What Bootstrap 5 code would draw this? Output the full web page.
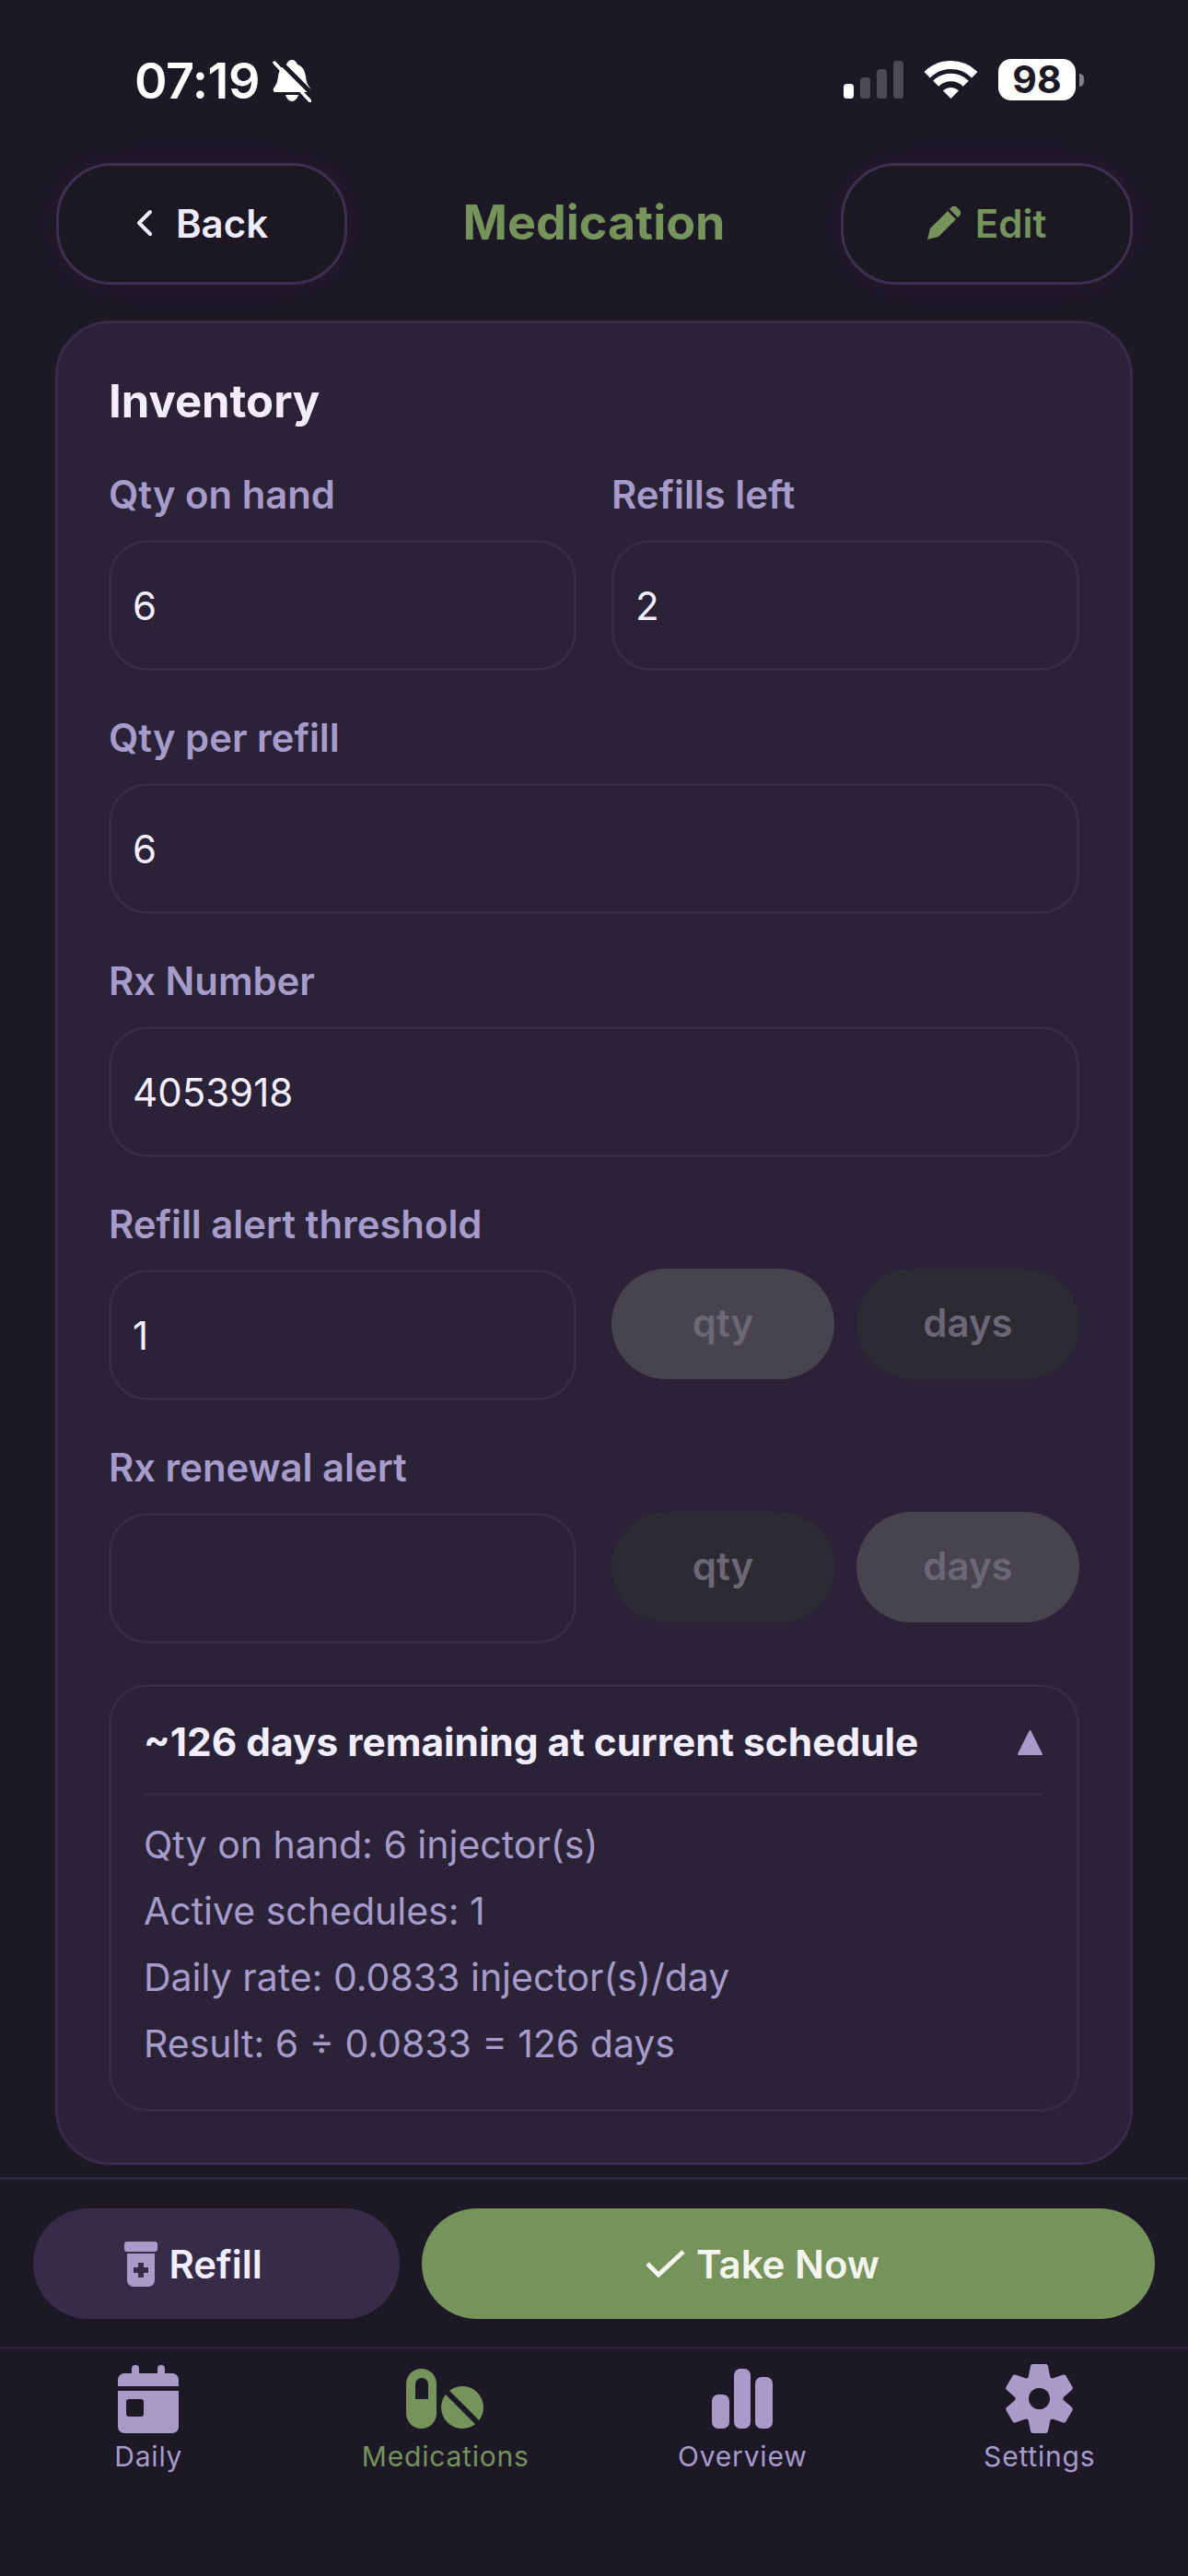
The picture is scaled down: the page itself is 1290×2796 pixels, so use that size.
<!DOCTYPE html>
<html lang="en">
<head>
    <meta charset="UTF-8">
    <meta name="viewport" content="width=device-width, initial-scale=1.0">
    <title>Medication</title>
    <link href="https://cdn.jsdelivr.net/npm/bootstrap@5.3.3/dist/css/bootstrap.min.css" rel="stylesheet">
    <style>
        body {
            background: #1d1826;
            font-family: Inter, "Liberation Sans", sans-serif;
            color: #f3eeff;
            width: 1290px;
            height: 2796px;
            overflow: hidden;
        }
        /* status bar */
        .status-row { height: 177px; padding: 61px 113px 0 146px; align-items: flex-start; }
        .clock { font-size: 54px; font-weight: 600; line-height: 54px; color: #fff; letter-spacing: -.5px; margin-right: 14px; }
        .bell { width: 42px; height: 46px; margin-top: 4px; }
        .signal { width: 65px; height: 41px; margin: 5px 23px 0 0; }
        .wifi { width: 57px; height: 41px; margin: 5px 23px 0 0; }
        .battery { width: 84px; height: 45px; margin-top: 3px; background: #fff; color: #1d1826; border-radius: 14px; font-size: 41px; font-weight: 700; line-height: 45px; text-align: center; }
        .battery-tip { width: 5px; height: 14px; margin: 19px 0 0 4px; background: #85828c; border-radius: 0 6px 6px 0; }
        /* header */
        .page-head { padding: 0 60px 0 61px; height: 171px; align-items: flex-start; }
        .head-btn { width: 316px; height: 132px; border-radius: 60px; background: #1b1823; border: 3px solid #3a3250; font-size: 42px; font-weight: 600; color: #f0ebff; padding-bottom: 8px; box-shadow: 0 0 24px rgba(42, 36, 56, .45); }
        .head-btn:hover { background: #1b1823; border-color: #3a3250; color: #f0ebff; }
        .head-btn.edit-btn, .head-btn.edit-btn:hover { width: 317px; color: #75935a; }
        .page-title { font-size: 52px; font-weight: 700; color: #75935a; line-height: 130px; margin: 0; }
        /* inventory card */
        .inv-card { margin: 0 60px; height: 2002px; background: #2a2338; border: 3px solid #352d48; border-radius: 60px; padding: 55px 55px 0; color: #f3eeff; }
        .inv-title { font-size: 49px; font-weight: 700; line-height: 60px; margin-bottom: 46px; }
        .field-label { display: block; font-size: 41.8px; font-weight: 600; line-height: 50px; margin-bottom: 24px; color: #a79bca; }
        .field-block { margin-bottom: 48px; }
        .two-up { --bs-gutter-x: 38px; --bs-gutter-y: 0; }
        .form-control.dark-input { height: 142px; background: transparent; border: 3px solid #352d48; border-radius: 42px; color: #f3eeff; font-size: 42px; padding: 0 23px; }
        .unit-btn { flex: 1 1 0; height: 120px; margin-top: -1px; border: 0; border-radius: 60px; font-size: 42px; font-weight: 600; color: #6b6774; background: #2c2a33; padding: 0 0 4px; }
        .unit-btn.is-picked { background: #48444f; }
        .calc-box { margin-top: 44px; height: 464px; border: 3px solid #352d48; border-radius: 42px; padding: 32px 35px 0; }
        .calc-head { font-size: 42.4px; font-weight: 700; line-height: 56px; padding-bottom: 27px; border-bottom: 3px solid #312a40; margin-bottom: 17px; }
        .calc-arrow { margin-right: 2px; }
        .calc-line { font-size: 41px; line-height: 72px; color: #a79bca; }
        /* actions */
        .action-bar { margin-top: 13px; height: 187px; padding: 31px 36px 0; gap: 24px; border-top: 3px solid #2e2740; border-bottom: 3px solid #2a2338; }
        .action-btn { height: 120px; border: 0; border-radius: 60px; font-size: 42px; font-weight: 600; color: #f3eeff; gap: 12px; }
        .refill-btn, .refill-btn:hover { width: 398px; background: #352d47; color: #f3eeff; padding: 0 50px 0 0; }
        .take-btn, .take-btn:hover { flex: 1 1 0; background: #75935a; color: #f5f5f0; padding: 0 56px 0 0; }
        /* tabs */
        .tab-item { text-align: center; padding-top: 16px; font-size: 30px; letter-spacing: .8px; line-height: 40px; color: #a79bca; text-decoration: none; display: block; }
        .tab-item.is-active { color: #75935a; }
        .tab-icon { display: block; margin: 0 auto 5px; height: 75px; }
    </style>
</head>
<body>
    <!-- Status bar -->
    <div class="d-flex status-row">
        <span class="clock">07:19</span>
        <svg class="bell" viewBox="0 0 42 46">
            <path fill="#fff" d="M21 0c3 0 5 2 6 5 6 2 8 7 9 13 1 7 2 9 5 13 1 2 0 4-2 4H3c-2 0-3-2-2-4 3-4 4-6 5-13 1-6 3-11 9-13 1-3 3-5 6-5z"></path>
            <path fill="#fff" d="M14 38h14c-1 4-4 7-7 7s-6-3-7-7z"></path>
            <path stroke="#1d1826" stroke-width="5" d="M5 -1L45 39"></path>
            <path stroke="#fff" stroke-width="3.5" stroke-linecap="round" d="M2 3L41 45"></path>
        </svg>
        <span class="ms-auto d-flex">
            <svg class="signal" viewBox="0 0 65 41">
                <rect x="0" y="25" width="11" height="16" rx="3.5" fill="#fff"></rect>
                <rect x="18" y="18" width="11" height="23" rx="3.5" fill="#4d4a58"></rect>
                <rect x="36" y="9" width="11" height="32" rx="3.5" fill="#4d4a58"></rect>
                <rect x="54" y="0" width="11" height="41" rx="3.5" fill="#4d4a58"></rect>
            </svg>
            <svg class="wifi" viewBox="0 0 57 41">
                <path fill="none" stroke="#fff" stroke-width="9" d="M2.7 15.2A36.5 36.5 0 0 1 54.3 15.2"></path>
                <path fill="none" stroke="#fff" stroke-width="8.5" d="M12.2 24.7A23 23 0 0 1 44.8 24.7"></path>
                <path fill="#fff" d="M28.5 41L20 32.5A12 12 0 0 1 37 32.5Z"></path>
            </svg>
            <span class="battery">98</span>
            <span class="battery-tip"></span>
        </span>
    </div>

    <!-- Header -->
    <div class="d-flex justify-content-between page-head">
        <button class="btn head-btn d-flex align-items-center justify-content-center gap-4">
            <svg width="20" height="30" viewBox="0 0 20 30"><path fill="none" stroke="#f0ebff" stroke-width="4" stroke-linecap="round" stroke-linejoin="round" d="M16 3L4 15L16 27"></path></svg>
            Back
        </button>
        <h1 class="page-title">Medication</h1>
        <button class="btn head-btn edit-btn d-flex align-items-center justify-content-center gap-3">
            <svg width="36" height="36" viewBox="0 0 36 36"><path fill="#75935a" d="M0 36L3 24L22 5L31 14L12 33ZM24 3l3-3a3 3 0 0 1 4 0l5 5a3 3 0 0 1 0 4l-3 3Z"></path></svg>
            Edit
        </button>
    </div>

    <!-- Inventory -->
    <div class="card inv-card">
        <div class="inv-title">Inventory</div>
        <div class="row two-up field-block">
            <div class="col-6">
                <label class="field-label">Qty on hand</label>
                <input class="form-control dark-input" value="6">
            </div>
            <div class="col-6">
                <label class="field-label">Refills left</label>
                <input class="form-control dark-input" value="2">
            </div>
        </div>
        <div class="field-block">
            <label class="field-label">Qty per refill</label>
            <input class="form-control dark-input" value="6">
        </div>
        <div class="field-block">
            <label class="field-label">Rx Number</label>
            <input class="form-control dark-input" value="4053918">
        </div>
        <div class="field-block">
            <label class="field-label">Refill alert threshold</label>
            <div class="row two-up">
                <div class="col-6"><input class="form-control dark-input" value="1"></div>
                <div class="col-6 d-flex align-items-start gap-4">
                    <button class="btn unit-btn is-picked">qty</button>
                    <button class="btn unit-btn">days</button>
                </div>
            </div>
        </div>
        <div>
            <label class="field-label">Rx renewal alert</label>
            <div class="row two-up">
                <div class="col-6"><input class="form-control dark-input" value=""></div>
                <div class="col-6 d-flex align-items-start gap-4">
                    <button class="btn unit-btn">qty</button>
                    <button class="btn unit-btn is-picked">days</button>
                </div>
            </div>
        </div>
        <div class="calc-box">
            <div class="calc-head d-flex justify-content-between align-items-center">
                <span>~126 days remaining at current schedule</span>
                <svg class="calc-arrow" width="27" height="27" viewBox="0 0 27 27"><path fill="#a79bca" stroke="#a79bca" stroke-width="2" stroke-linejoin="round" d="M13.5 1L26 26H1Z"></path></svg>
            </div>
            <div class="calc-line">Qty on hand: 6 injector(s)</div>
            <div class="calc-line">Active schedules: 1</div>
            <div class="calc-line">Daily rate: 0.0833 injector(s)/day</div>
            <div class="calc-line">Result: 6 ÷ 0.0833 = 126 days</div>
        </div>
    </div>

    <!-- Refill / take -->
    <div class="d-flex action-bar">
        <button class="btn action-btn refill-btn d-flex align-items-center justify-content-center">
            <svg width="36" height="49" viewBox="0 0 36 49">
                <rect x="0" y="0" width="36" height="11" rx="3" fill="#a79bca"></rect>
                <path fill="#a79bca" d="M3 13h30v29a7 7 0 0 1-7 7H10a7 7 0 0 1-7-7z"></path>
                <path fill="#352d47" d="M15 23h6v5h5v6h-5v5h-6v-5h-5v-6h5z"></path>
            </svg>
            Refill
        </button>
        <button class="btn action-btn take-btn d-flex align-items-center justify-content-center">
            <svg width="43" height="30" viewBox="0 0 43 30"><path fill="none" stroke="#f5f5f0" stroke-width="5" d="M2 15L14 27L41 2"></path></svg>
            Take Now
        </button>
    </div>

    <!-- Tabs -->
    <div class="row g-0">
        <div class="col-3">
            <a class="tab-item" href="#">
                <svg class="tab-icon" width="66" height="75" viewBox="0 0 66 75">
                    <path fill="#a79bca" d="M15 10V5a4 4 0 0 1 8 0v5h20V5a4 4 0 0 1 8 0v5h8a7 7 0 0 1 7 7v7H0v-7a7 7 0 0 1 7-7z"></path>
                    <path fill="#a79bca" d="M0 29h66v39a7 7 0 0 1-7 7H7a7 7 0 0 1-7-7z"></path>
                    <rect x="9" y="38" width="19" height="19" rx="3" fill="#1d1826"></rect>
                </svg>
                Daily
            </a>
        </div>
        <div class="col-3">
            <a class="tab-item is-active" href="#">
                <svg class="tab-icon" width="85" height="75" viewBox="0 0 85 75">
                    <rect x="0" y="5" width="33" height="65" rx="16.5" fill="#75935a"></rect>
                    <path fill="#1d1826" d="M10 38V22a7 7 0 0 1 14 0v16z"></path>
                    <circle cx="61" cy="47" r="23" fill="#75935a"></circle>
                    <path stroke="#1d1826" stroke-width="6" d="M43 29L79 65"></path>
                </svg>
                Medications
            </a>
        </div>
        <div class="col-3">
            <a class="tab-item" href="#">
                <svg class="tab-icon" width="66" height="75" viewBox="0 0 66 75">
                    <rect x="0" y="33" width="19" height="37" rx="7" fill="#a79bca"></rect>
                    <rect x="24" y="5" width="18" height="65" rx="7" fill="#a79bca"></rect>
                    <rect x="47" y="14" width="19" height="56" rx="7" fill="#a79bca"></rect>
                </svg>
                Overview
            </a>
        </div>
        <div class="col-3">
            <a class="tab-item" href="#">
                <svg class="tab-icon" width="75" height="75" viewBox="-37.5 -37.5 75 75">
                    <circle r="26" fill="#a79bca"></circle>
                    <g fill="#a79bca" stroke="#a79bca" stroke-width="5" stroke-linejoin="round">
                        <path d="M-7 -35H7L10 -20H-10Z"></path>
                        <path transform="rotate(60)" d="M-7 -35H7L10 -20H-10Z"></path>
                        <path transform="rotate(120)" d="M-7 -35H7L10 -20H-10Z"></path>
                        <path transform="rotate(180)" d="M-7 -35H7L10 -20H-10Z"></path>
                        <path transform="rotate(240)" d="M-7 -35H7L10 -20H-10Z"></path>
                        <path transform="rotate(300)" d="M-7 -35H7L10 -20H-10Z"></path>
                    </g>
                    <circle r="11.5" fill="#1d1826"></circle>
                </svg>
                Settings
            </a>
        </div>
    </div>
    <script src="https://cdn.jsdelivr.net/npm/bootstrap@5.3.3/dist/js/bootstrap.bundle.min.js"></script>
</body>
</html>
